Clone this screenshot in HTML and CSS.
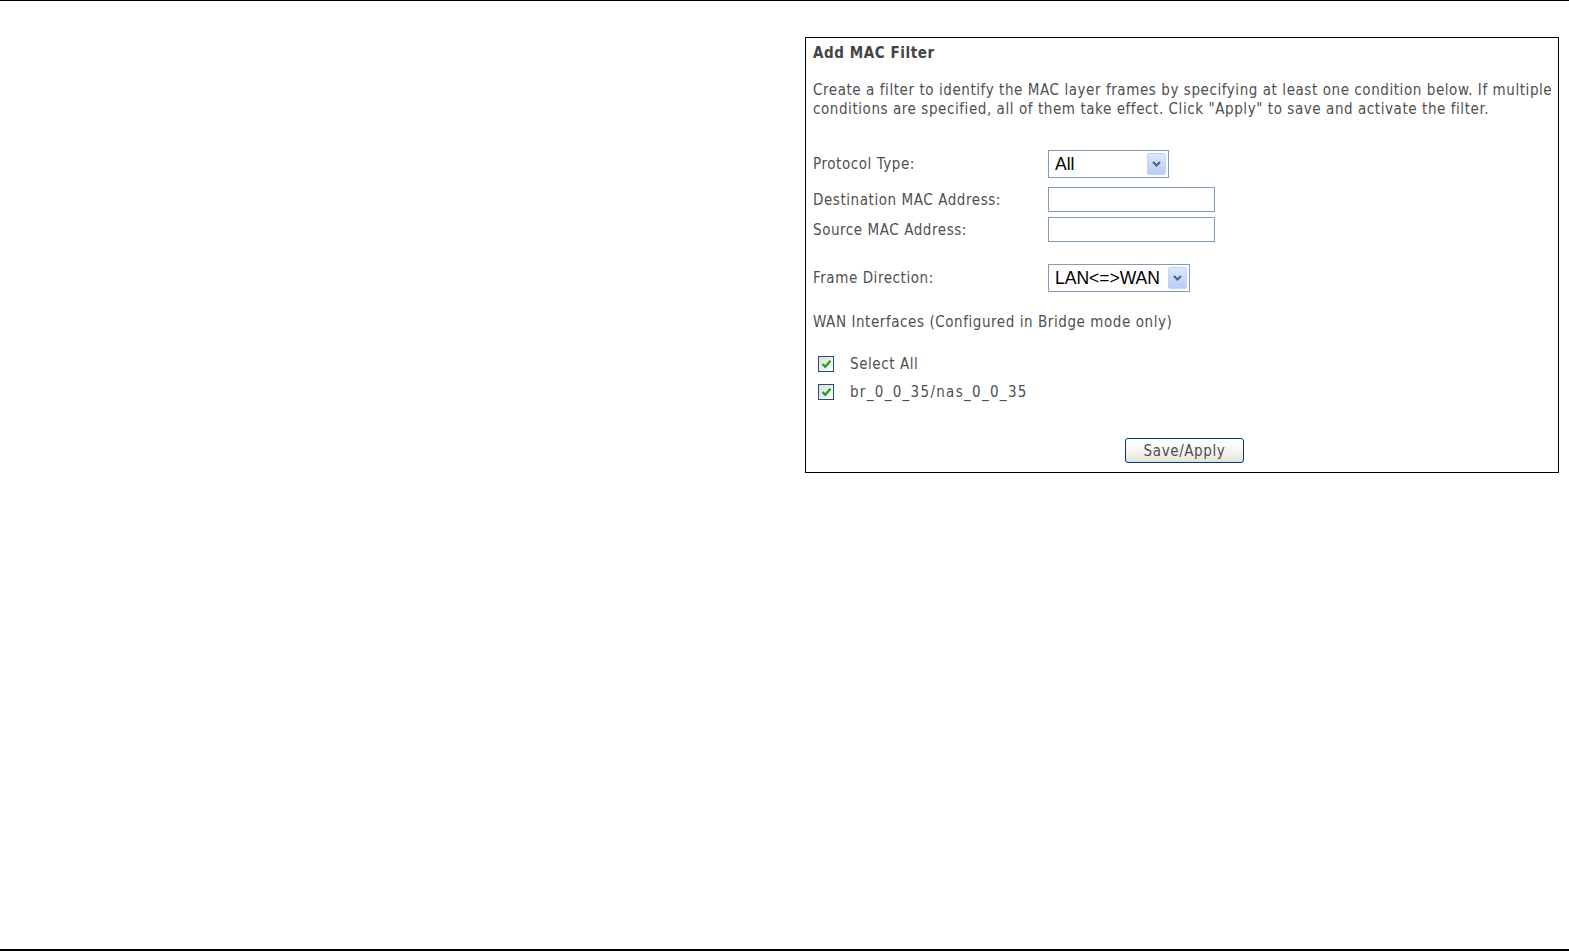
FILE: index.html
```html
<!DOCTYPE html>
<html lang="en">
<head>
<meta charset="UTF-8" />
<title>Add MAC Filter</title>
<link rel="stylesheet" href="styles.css">
</head>
<body>

<div class="page">
  <div class="rule-top"></div>

  <div class="content">
    <div class="panel">
      <h2 class="title">Add MAC Filter</h2>
      <p class="desc">Create a filter to identify the MAC layer frames by specifying at least one condition below. If multiple<br>conditions are specified, all of them take effect. Click "Apply" to save and activate the filter.</p>

      <div class="row row-protocol">
        <label class="lbl">Protocol Type:</label>
        <div class="combo combo-protocol">
          <select>
            <option>All</option>
          </select>
          <span class="combo-btn">
            <svg width="9" height="6" viewBox="0 0 9 6"><path d="M1 1 L4.5 4.5 L8 1" fill="none" stroke="#4d6185" stroke-width="2"/></svg>
          </span>
        </div>
      </div>

      <div class="row row-dest">
        <label class="lbl">Destination MAC Address:</label>
        <input class="field" type="text">
      </div>

      <div class="row row-src">
        <label class="lbl">Source MAC Address:</label>
        <input class="field" type="text">
      </div>

      <div class="row row-frame">
        <label class="lbl">Frame Direction:</label>
        <div class="combo combo-frame">
          <select>
            <option>LAN&lt;=&gt;WAN</option>
          </select>
          <span class="combo-btn">
            <svg width="9" height="6" viewBox="0 0 9 6"><path d="M1 1 L4.5 4.5 L8 1" fill="none" stroke="#4d6185" stroke-width="2"/></svg>
          </span>
        </div>
      </div>

      <div class="wan-note">WAN Interfaces (Configured in Bridge mode only)</div>

      <div class="checks">
        <div class="check-row">
          <span class="cbox"><svg width="11" height="10" viewBox="0 0 11 10"><path d="M1.5 5 L4.2 7.8 L9.5 1.8" fill="none" stroke="#21a121" stroke-width="2.4"/></svg></span>
          <span>Select All</span>
        </div>
        <div class="check-row">
          <span class="cbox"><svg width="11" height="10" viewBox="0 0 11 10"><path d="M1.5 5 L4.2 7.8 L9.5 1.8" fill="none" stroke="#21a121" stroke-width="2.4"/></svg></span>
          <span class="iface">br_0_0_35/nas_0_0_35</span>
        </div>
      </div>

      <div class="actions">
        <button class="btn">Save/Apply</button>
      </div>
    </div>
  </div>

  <div class="rule-bottom"></div>
</div>

</body>
</html>
```

FILE: styles.css
```css
html, body {
  margin: 0; padding: 0;
  background: #fff;
}

body {
  font-family: "DejaVu Sans Condensed", "DejaVu Sans", Tahoma, sans-serif;
  font-size: 15px;
  letter-spacing: 0.57px;
  color: #4f4f4f;
}

.page {
  height: 952px;
  display: flex; flex-direction: column;
}

.rule-top {
  height: 1px;
  background: #000;
}

.content {
  flex: 1;
  padding: 36px 0 0 805px;
}

.rule-bottom {
  height: 2px;
  margin-bottom: 1px;
  background: #000;
}

.panel {
  width: 754px;
  box-sizing: border-box;
  border: 1px solid #000;
  padding: 6px 0 9px 7px;
}

.title {
  margin: 0;
  font-size: 15px;
  font-weight: bold;
  line-height: 19px;
  color: #444;
}

.desc {
  margin: 18px 0 0 0;
  line-height: 19px;
  white-space: nowrap;
}

.row {
  display: flex;
  align-items: center;
}

.lbl {
  width: 235px;
  flex: none;
}

.row-protocol { margin-top: 31px; }
.row-dest { margin-top: 9px; }
.row-src { margin-top: 5px; }
.row-frame { margin-top: 22px; }

.combo {
  display: flex;
  align-items: stretch;
  height: 28px;
  box-sizing: border-box;
  border: 1px solid #7f9db9;
  background: #fff;
  padding: 2px;
}
.combo-protocol { width: 121px; }
.combo-frame { width: 142px; }

.combo select {
  flex: 1;
  min-width: 0;
  appearance: none;
  -webkit-appearance: none;
  border: none;
  outline: none;
  background: transparent;
  font-family: "Liberation Sans", Arial, sans-serif;
  font-size: 17.5px;
  letter-spacing: 0;
  color: #000;
  padding: 0 0 0 4px;
  margin: 0;
}

.combo-btn {
  width: 19px;
  flex: none;
  display: flex; align-items: center; justify-content: center;
  background: linear-gradient(#dce8fc, #b9cdf5);
  border: 1px solid #c3d3fd;
  border-radius: 2px;
  box-sizing: border-box;
}

.field {
  width: 167px;
  height: 25px;
  box-sizing: border-box;
  border: 1px solid #7f9db9;
  margin: 0;
  padding: 0 3px;
  font-size: 14px;
}

.wan-note {
  margin-top: 21px;
  line-height: 19px;
}

.checks {
  margin-top: 18px;
  padding-left: 5px;
}

.check-row {
  display: flex;
  align-items: center;
  height: 28px;
  gap: 16px;
}

.iface {
  letter-spacing: 1.3px;
}

.cbox {
  width: 16px; height: 16px;
  box-sizing: border-box;
  border: 1px solid #1c5180;
  background: linear-gradient(135deg, #dcdcd7, #fff);
  display: flex; align-items: center; justify-content: center;
}

.actions {
  margin-top: 32px;
  text-align: center;
  padding-right: 2px;
}

.btn {
  width: 119px;
  height: 25px;
  padding: 0;
  border: 1px solid #003c74;
  border-radius: 3px;
  background: linear-gradient(#fff, #f4f3ee 60%, #e3e1d6);
  font-family: "DejaVu Sans Condensed", "DejaVu Sans", Tahoma, sans-serif;
  font-size: 15px;
  letter-spacing: 0.6px;
  color: #4f4f4f;
}
```
